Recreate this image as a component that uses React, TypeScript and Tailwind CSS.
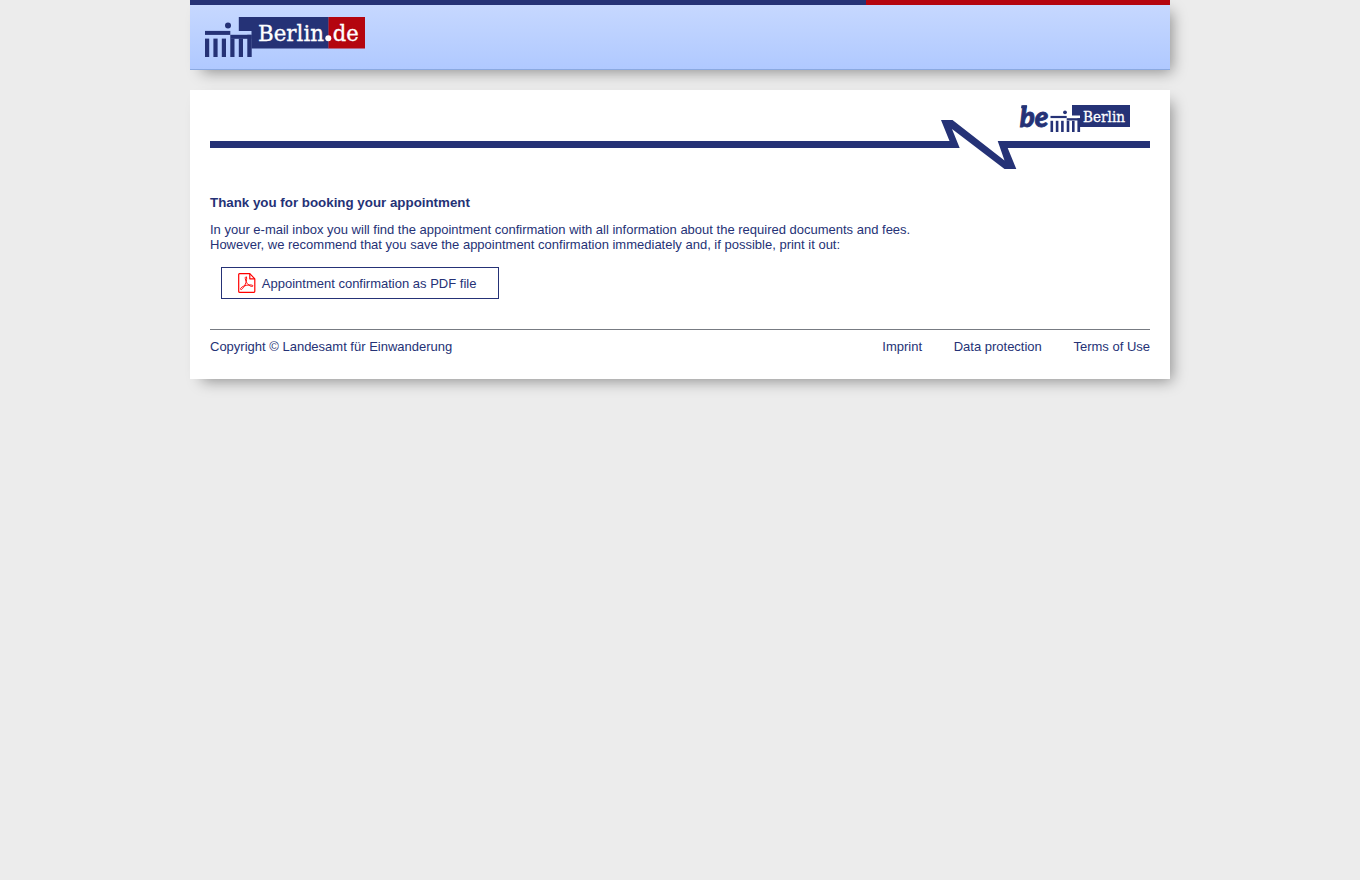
const NAVY = "#253276";

function Gate() {
  return (
    <g fill={NAVY}>
      <circle cx="23" cy="8.6" r="3" />
      <rect x="0" y="13.9" width="25.3" height="4" />
      <rect x="25.3" y="17.8" width="21.2" height="4" />
      <rect x="0" y="21.6" width="4.2" height="18.4" />
      <rect x="8.4" y="21.6" width="4.2" height="18.4" />
      <rect x="16.8" y="21.6" width="4.2" height="18.4" />
      <rect x="25.3" y="21.6" width="4.2" height="18.4" />
      <rect x="33.8" y="21.6" width="4.2" height="18.4" />
      <rect x="42.3" y="17.8" width="4.4" height="22.2" />
    </g>
  );
}

function BerlinDeLogo() {
  return (
    <svg width="160" height="40" viewBox="0 0 160 40" className="block">
      <path d="M33.8 0H123.7V31.5H46.5V13.9H33.8Z" fill={NAVY} />
      <rect x="123.5" y="0" width="36.5" height="31.5" fill="#b4050f" />
      <Gate />
      <g fill="#fff" stroke="#fff" strokeWidth="0.35" fontFamily='"DejaVu Serif", serif' fontSize="23">
        <text x="53" y="24" textLength="66" lengthAdjust="spacingAndGlyphs">Berlin</text>
        <text x="127.7" y="24" textLength="26" lengthAdjust="spacingAndGlyphs">de</text>
      </g>
      <circle cx="123.3" cy="21.3" r="3" fill="#fff" />
    </svg>
  );
}

function BeBerlinLogo() {
  return (
    <svg width="110" height="30" viewBox="0 0 110 30" className="block overflow-visible">
      <text x="-0.3" y="22" fill={NAVY} stroke={NAVY} strokeWidth="0.8" fontFamily="Lato, sans-serif" fontWeight="900" fontStyle="italic" fontSize="28" textLength="28.8" lengthAdjust="spacingAndGlyphs">be</text>
      <path d="M1.5 0.3H7L6.5 3.2H1Z" fill={NAVY} />
      <path d="M52 0H110V22H60V10.5H52Z" fill={NAVY} />
      <g fill={NAVY}>
        <circle cx="45" cy="7.3" r="1.9" />
        <rect x="30.5" y="10.9" width="16.2" height="2.2" />
        <rect x="46.7" y="13.2" width="13.3" height="2.3" />
        <rect x="30.5" y="15.8" width="2.6" height="11.2" />
        <rect x="35.8" y="15.8" width="2.6" height="11.2" />
        <rect x="41.1" y="15.8" width="2.6" height="11.2" />
        <rect x="46.7" y="15.8" width="2.6" height="11.2" />
        <rect x="52" y="15.8" width="2.6" height="11.2" />
        <rect x="57.4" y="13.2" width="2.7" height="13.8" />
      </g>
      <text x="63" y="17" fill="#fff" stroke="#fff" strokeWidth="0.3" fontFamily='"DejaVu Serif", serif' fontSize="14.7" textLength="42" lengthAdjust="spacingAndGlyphs">Berlin</text>
    </svg>
  );
}

function PdfIcon() {
  return (
    <svg width="18" height="20" viewBox="0 0 18 20" fill="none" stroke="#f00" strokeWidth="1.2" strokeLinejoin="round" className="block">
      <path d="M1.5.7H11.8L16.8 5.8V18.3Q16.8 19.3 15.9 19.3H1.5Q.7 19.3.7 18.3V1.7Q.7.7 1.5.7Z" />
      <path d="M11.8.7V5.8H17" />
      <path strokeWidth="0.95" d="M8 3.6C6.7 4 7.3 6.6 8.2 8.6C7.6 11.6 4.7 16.2 3.2 16.6C1.6 16.4 2.8 14.4 5.5 13.2C9.2 11.7 13.2 11.6 14.7 12.4C15.7 13.6 13.4 14.1 11.1 12.3C9.3 11 8.8 9.8 8.2 8.6C8.9 5.8 8.8 3.6 8 3.6Z" />
    </svg>
  );
}

export default function App() {
  return (
    <div className="min-h-screen bg-[#ececec] font-['Liberation_Sans',Arial,sans-serif] text-[13px] leading-[15px] text-[#253276]">
      <div className="mx-auto flex w-[980px] flex-col gap-5">
        <header className="h-[70px] border-b border-[#8ba9e0] bg-linear-to-b from-[#c8d9ff] to-[#b0c9ff] shadow-[7px_7px_14px_-5px_rgba(0,0,0,0.4)]">
          <div className="flex h-[5px]">
            <div className="w-[676px] bg-[#253276]" />
            <div className="flex-1 bg-[#b4050f]" />
          </div>
          <div className="pt-3 pl-[15px]">
            <BerlinDeLogo />
          </div>
        </header>

        <main className="h-[289px] bg-white px-5 shadow-[7px_7px_14px_-5px_rgba(0,0,0,0.4)]">
          <div className="relative h-[79px]">
            <svg width="940" height="79" viewBox="0 0 940 79" fill={NAVY} className="block">
              <path d="M0 51H739.5L731 30H742.5L794.5 70.5L787.7 51H940V58H797.7L806.3 79H794.5L742 39L749.7 58H0Z" />
            </svg>
            <div className="absolute top-[15px] right-5">
              <BeBerlinLogo />
            </div>
          </div>

          <h1 className="mt-[26px] text-[13.33px] font-bold">Thank you for booking your appointment</h1>
          <p className="mt-3">
            In your e-mail inbox you will find the appointment confirmation with all information about the required documents and fees.
            <br />
            However, we recommend that you save the appointment confirmation immediately and, if possible, print it out:
          </p>
          <a className="mt-[15px] ml-[11px] flex h-8 w-[278px] items-center gap-[5.8px] border border-[#253276] pl-4">
            <PdfIcon />
            <span>Appointment confirmation as PDF file</span>
          </a>
          <footer className="mt-[30px] flex justify-between border-t border-[#777b82] pt-[9px]">
            <span>Copyright © Landesamt für Einwanderung</span>
            <nav className="flex gap-[31.6px]">
              <a>Imprint</a>
              <a>Data protection</a>
              <a>Terms of Use</a>
            </nav>
          </footer>
        </main>
      </div>
    </div>
  );
}
